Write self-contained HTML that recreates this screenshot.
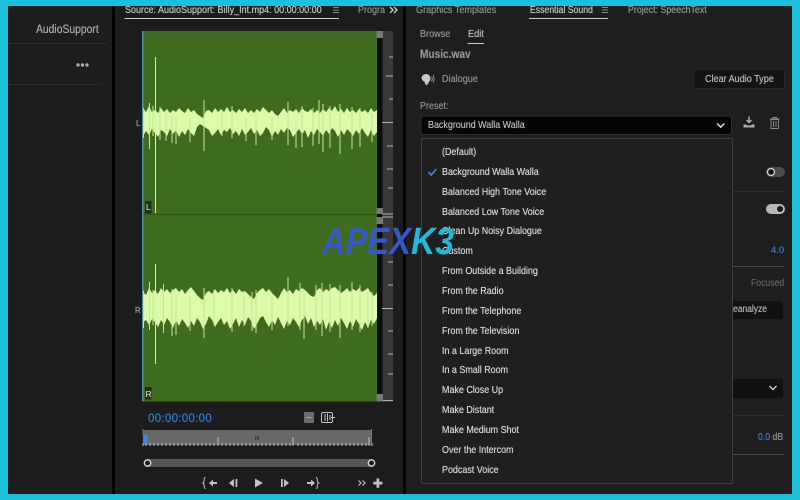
<!DOCTYPE html>
<html><head><meta charset="utf-8"><style>
html,body{margin:0;padding:0;background:#1cc0d9}
#p{position:relative;width:800px;height:500px;overflow:hidden;background:#1cc0d9;font-family:"Liberation Sans",sans-serif;font-size:10px;color:#b8b8b8;filter:blur(.3px)}
.a{position:absolute;white-space:nowrap;line-height:12px;transform-origin:left center;text-shadow:0 0 .5px currentColor}
.m{position:absolute;left:442px;white-space:nowrap;line-height:12px;color:#d4d4d4;font-size:10.4px;transform-origin:left center;transform:scaleX(.86);text-shadow:0 0 .5px currentColor}
svg{position:absolute;left:0;top:0}
</style></head><body><div id="p">
<div class="a" style="left:8px;top:6px;width:784px;height:488px;background:#000"></div>
<div class="a" style="left:8px;top:6px;width:104px;height:488px;background:#1d1d1e"></div>
<div class="a" style="left:115px;top:6px;width:288px;height:488px;background:#1c1c1d"></div>
<div class="a" style="left:406px;top:6px;width:386px;height:488px;background:#1e1e1f"></div>

<svg width="800" height="500" viewBox="0 0 800 500">
<!-- left panel -->
<path d="M8 43.500H108M8 84.500H102" stroke="#2a2a2a" stroke-width="1" fill="none"/>
<circle cx="78" cy="65" r="1.700" fill="#aaa"/><circle cx="82.500" cy="65" r="1.700" fill="#aaa"/><circle cx="87" cy="65" r="1.700" fill="#aaa"/>
<!-- source tab -->
<path d="M124.500 18.500H339" stroke="#ccc" stroke-width="1"/>
<path d="M333 7.500h6M333 10h6M333 12.500h6" stroke="#888" stroke-width="1"/>
<path d="M390 7l3 3-3 3M394 7l3 3-3 3" stroke="#ccc" stroke-width="1.300" fill="none"/>
<!-- waveform -->
<rect x="142" y="31" width="235" height="370.500" fill="#3f6b1e"/>
<rect x="142" y="31" width="1.500" height="370.500" fill="#4f8fa0"/>
<path d="M143 214.500H377" stroke="#31541a" stroke-width="1"/>
<path d="M143 108 146 112 149 106 152 112 155 110 158 113 161 108 164 112 167 109 170 113 173 110 176 112 179 108 182 111 185 113 188 108 191 112 194 110 197 114 200 116 203 118 206 111 209 110 212 113 215 108 218 112 221 109 224 112 227 107 230 112 233 110 236 113 239 109 242 112 245 108 248 113 251 110 254 113 257 109 260 112 263 107 266 110 269 113 272 110 275 114 278 116 281 112 284 108 287 113 290 110 293 112 296 109 299 113 302 108 305 111 308 112 311 109 314 113 317 110 320 113 323 109 326 112 329 108 332 111 335 106 338 112 341 109 344 113 347 108 350 112 353 110 356 113 359 109 362 112 365 110 368 113 371 108 374 112 377 110L377 132 374 136 371 130 368 137 365 133 362 128 359 134 356 130 353 136 350 132 347 129 344 135 341 130 338 137 335 131 332 128 329 134 326 130 323 136 320 132 317 129 314 135 311 131 308 138 305 130 302 134 299 129 296 133 293 137 290 130 287 128 284 133 281 129 278 135 275 131 272 137 269 130 266 127 263 133 260 136 257 130 254 134 251 128 248 132 245 135 242 129 239 136 236 131 233 134 230 128 227 132 224 130 221 135 218 129 215 133 212 136 209 130 206 128 203 126 200 124 197 127 194 136 191 133 188 129 185 135 182 131 179 137 176 130 173 134 170 129 167 136 164 132 161 130 158 137 155 133 152 129 149 135 146 131 143 136Z" fill="#dcfcaa"/>
<path d="M155.500 57V213" stroke="#dcefc0" stroke-width="1"/>
<path d="M143.500 108V138M149.500 103V149M153 106V136M160 107V140M166 112V141M172 116V143M176 116V144M190 118V142M204 100V151M222 110V136M232 106V138M246 118V141M256 115V145M272 116V140M288 102V145M296 124V148M302 106V147M313 108V146M319 100V144M323 104V152M330 106V148M340 104V154M352 107V149M360 108V147M372 110V142" stroke="#c6e59a" stroke-width="1" fill="none"/>
<path d="M143 292 146 295 149 288 152 293 155 290 158 294 161 288 164 292 167 289 170 293 173 290 176 288 179 292 182 289 185 294 188 290 191 287 194 291 197 295 200 298 203 300 206 293 209 291 212 294 215 289 218 293 221 290 224 292 227 288 230 293 233 290 236 294 239 289 242 292 245 291 248 294 251 297 254 299 257 293 260 290 263 288 266 292 269 289 272 293 275 296 278 299 281 293 284 288 287 292 290 290 293 294 296 289 299 291 302 288 305 290 308 293 311 296 314 297 317 290 320 288 323 292 326 289 329 291 332 288 335 287 338 290 341 293 344 291 347 288 350 292 353 289 356 291 359 288 362 292 365 290 368 288 371 293 374 296 377 293L377 318 374 324 371 320 368 328 365 322 362 330 359 324 356 319 353 327 350 321 347 329 344 323 341 318 338 326 335 320 332 328 329 322 326 330 323 319 320 325 317 321 314 327 311 318 308 324 305 316 302 320 299 327 296 322 293 318 290 325 287 321 284 329 281 323 278 317 275 325 272 320 269 327 266 322 263 316 260 318 257 324 254 329 251 321 248 317 245 325 242 320 239 327 236 318 233 324 230 329 227 321 224 325 221 318 218 322 215 327 212 320 209 316 206 324 203 329 200 322 197 318 194 326 191 321 188 328 185 323 182 319 179 326 176 320 173 328 170 322 167 318 164 325 161 320 158 327 155 322 152 319 149 325 146 320 143 322Z" fill="#dcfcaa"/>
<path d="M155.500 264V364" stroke="#dcefc0" stroke-width="1"/>
<path d="M143.500 291V328M149.500 282V330M153 290V325M163.500 284V333M172 289V336M176 294V335M190 296V331M204 288V338M214 290V325M232 288V332M244 296V326M252 292V331M256 290V333M272 296V330M288 277V326M300 283V330M304 290V339M316 285V330M322 283V336M330 284V332M340 285V338M352 282V330M360 285V332M368 290V328M372 292V326" stroke="#c6e59a" stroke-width="1" fill="none"/>
<rect x="145" y="201" width="6.500" height="12.500" fill="#1f3110"/>
<rect x="145" y="387" width="6.500" height="12.500" fill="#1f3110"/>
<!-- meter -->
<rect x="377" y="31" width="5.500" height="370" fill="#0c0c0c"/>
<rect x="382.500" y="31" width="10.500" height="371" fill="#383838"/>
<path d="M389 57h4M386 76h7M389 99h4M382 122.500h11M387 146h6M387 169h6M388 188h5M382 217h11M382 214h11M388 262h5M388 285h5M382 308.500h11M388 331h5M388 354h5M388 374h5M382 400.500h11" stroke="#b4b4b4" stroke-width="1" fill="none"/>
<path d="M377 217h5v4h-5z" fill="#24408a"/>
<rect x="376.500" y="31" width="6.500" height="7" fill="#777"/>
<rect x="376.500" y="208" width="6.500" height="6" fill="#777"/>
<rect x="376.500" y="217" width="6.500" height="7" fill="#777"/>
<rect x="376.500" y="394" width="6.500" height="7.500" fill="#777"/>
<!-- time controls -->
<rect x="304" y="412" width="10" height="11" rx="1" fill="#6b6b6b"/><path d="M306.500 417.500h5" stroke="#aaa" stroke-width="1"/>
<rect x="321.500" y="412.500" width="11" height="10" rx="1.500" fill="none" stroke="#c6c6c6" stroke-width="1"/>
<path d="M325 414v7M327.500 413.500v8M330 415v5M331 417.500h4" stroke="#c6c6c6" stroke-width="1" fill="none"/>
<!-- mini timeline -->
<rect x="143" y="430" width="229" height="15" fill="#686868"/>
<path d="M143 443v3M146 443v3M150 443v3M154 443v3M158 443v3M162 443v3M166 443v3M170 443v3M174 443v3M178 443v3M182 443v3M186 443v3M190 443v3M194 443v3M198 443v3M202 443v3M206 443v3M210 443v3M214 443v3M218 437v9M222 443v3M226 443v3M230 443v3M234 443v3M238 443v3M242 443v3M246 443v3M250 443v3M254 443v3M258 443v3M262 443v3M266 443v3M270 443v3M274 443v3M278 443v3M282 443v3M286 443v3M290 443v3M293 437v9M298 443v3M302 443v3M306 443v3M310 443v3M314 443v3M318 443v3M322 443v3M326 443v3M330 443v3M334 443v3M338 443v3M342 443v3M346 443v3M350 443v3M354 443v3M358 443v3M362 443v3M366 443v3M369 437v9M372 443v3" stroke="#c4c4c4" stroke-width="1" fill="none"/>
<path d="M255.500 436v4M257 436v4M258.500 436v4" stroke="#3a3a3a" stroke-width="1" fill="none"/>
<rect x="143" y="435" width="4.500" height="8.500" fill="#3a8ae6"/>
<path d="M143 429v6M371.500 429v16" stroke="#4a7fd0" stroke-width="1" fill="none"/>
<!-- scrollbar -->
<rect x="147" y="459" width="224" height="8" fill="#565656"/>
<circle cx="147.500" cy="463" r="3.200" fill="#1a1a1a" stroke="#ddd" stroke-width="1.300"/>
<circle cx="371.500" cy="463" r="3.200" fill="#1a1a1a" stroke="#ddd" stroke-width="1.300"/>
<!-- transport -->
<g fill="#c2c2c2" stroke="none">
<path d="M209 483l4-3.500v2.500H217v2H213v2.500z"/>
<path d="M229 483l5-4v8zM235.500 479h1.800v8h-1.800z"/>
<path d="M255 478.500l8 4.500-8 4.500z"/>
<path d="M281 479h1.800v8H281zM284 479l5 4-5 4z"/>
<path d="M315 483l-4-3.500v2.500H307v2h4v2.500z"/>
<path d="M376.500 478.500h2.800v3.200h3.200v2.800h-3.200v3.200h-2.800v-3.200h-3.200v-2.800h3.200z"/>
</g>
<path d="M205.500 477.500c-1.500 0-1.300 1.500-1.300 2.800 0 1.500-.7 2.400-1.500 2.700.8.300 1.500 1.200 1.500 2.700 0 1.300-.2 2.800 1.300 2.800M316 477.500c1.500 0 1.300 1.500 1.300 2.800 0 1.500.7 2.400 1.500 2.700-.8.300-1.500 1.200-1.500 2.700 0 1.300.2 2.800-1.300 2.800" stroke="#c2c2c2" stroke-width="1" fill="none"/>
<path d="M358.500 480.500l2.500 2.500-2.500 2.500M362.500 480.500l2.500 2.500-2.500 2.500" stroke="#c2c2c2" stroke-width="1.200" fill="none"/>
<!-- right panel lines -->
<path d="M529 18.500H608M467.500 43.500H484" stroke="#ccc" stroke-width="1" fill="none"/>
<path d="M602 7.500h6M602 10h6M602 12.500h6" stroke="#888" stroke-width="1"/>
<path d="M733 191.500H785M733 415.500H784" stroke="#2c2c2c" stroke-width="1" fill="none"/>
<path d="M733 266.500H784M733 454.500H784" stroke="#4a4a4a" stroke-width="1" fill="none"/>
<!-- dialog icon -->
<path d="M421.500 79c0-3 2-5 4.500-5s4.500 2 4.500 4.600c0 2-1.300 3-2 3.800-.4.700-.2 2-1.200 2.300h-1.500c-1-.5-.4-1.700-1.100-2.500-1-1-2.700-1.500-2.700-3.200z" fill="#c8c8c8"/>
<path d="M431.500 76.500c1 1.200 1 3.500 0 4.800M433 75c1.500 2 1.500 5.500 0 7.500" stroke="#aaa" stroke-width=".8" fill="none"/>
<!-- clear button -->
<rect x="693.500" y="69.500" width="91" height="19" rx="2" fill="#141414" stroke="#262626"/>
<!-- preset select -->
<rect x="421" y="116" width="310.500" height="18.500" rx="2" fill="#050505" stroke="#2c2c2c"/>
<path d="M717 123.500l3.700 3.700 3.700-3.700" stroke="#ddd" stroke-width="1.500" fill="none"/>
<path d="M749 116.500v5.500M746.500 120l2.500 2.500 2.500-2.500" stroke="#b0b0b0" stroke-width="1.400" fill="none"/>
<path d="M743.500 124.500h2.500l1 1h4l1-1h2.500v3h-11z" fill="#b0b0b0"/>
<path d="M770 119h9.500M773 119v-1.500h3.500v1.500" stroke="#8a8a8a" stroke-width="1" fill="none"/>
<rect x="771" y="119.500" width="7.500" height="9" fill="none" stroke="#8a8a8a" stroke-width="1"/>
<path d="M773.500 121v6M776 121v6" stroke="#8a8a8a" stroke-width="1"/>
<!-- toggles -->
<rect x="766" y="167" width="19" height="10" rx="5" fill="#4c4c4c"/><circle cx="771" cy="172" r="3.500" fill="#141414" stroke="#ddd" stroke-width="1.200"/>
<rect x="766" y="204" width="19" height="10" rx="5" fill="#b8b8b8"/><circle cx="780" cy="209" r="3" fill="#1a1a1a"/>
<!-- reanalyze & select -->
<rect x="720" y="301" width="63" height="18" rx="2" fill="#111"/>
<rect x="720" y="379" width="63" height="19" rx="2" fill="#111"/>
<path d="M769.500 386l3.500 3.500 3.500-3.500" stroke="#ccc" stroke-width="1.400" fill="none"/>
</svg>

<!-- texts -->
<div class="a" style="left:35.500px;top:24px;font-size:11.500px;color:#a9a9a9;transform:scaleX(.9)">AudioSupport</div>
<div class="a" style="left:125px;top:5px;font-size:10px;color:#c4c4c4;transform:scaleX(.9)">Source: AudioSupport: Billy_Int.mp4: 00:00:00:00</div>
<div class="a" style="left:358px;top:5px;width:30px;overflow:hidden;font-size:10px;color:#909090;transform:scaleX(.9)">Program</div>
<div class="a" style="left:136px;top:118px;font-size:8px;color:#999">L</div>
<div class="a" style="left:135px;top:305px;font-size:8px;color:#999">R</div>
<div class="a" style="left:146px;top:201px;font-size:8.500px;color:#ccc">L</div>
<div class="a" style="left:145.500px;top:388px;font-size:8.500px;color:#ccc">R</div>
<div class="a" style="left:148px;top:412.500px;font-size:11.500px;color:#2f7bd8;letter-spacing:.3px">00:00:00:00</div>

<div class="a" style="left:416px;top:5px;font-size:10px;color:#8f8f8f;transform:scaleX(.91)">Graphics Templates</div>
<div class="a" style="left:530px;top:5px;font-size:10px;color:#c4c4c4;transform:scaleX(.87)">Essential Sound</div>
<div class="a" style="left:627.500px;top:5px;font-size:10px;color:#949494;transform:scaleX(.885)">Project: SpeechText</div>
<div class="a" style="left:420px;top:29px;font-size:10px;color:#8f8f8f;transform:scaleX(.91)">Browse</div>
<div class="a" style="left:467.500px;top:29px;font-size:10px;color:#b8b8b8;transform:scaleX(.92)">Edit</div>
<div class="a" style="left:420px;top:49px;font-size:11.500px;font-weight:bold;color:#929292;transform:scaleX(.88)">Music.wav</div>
<div class="a" style="left:442px;top:74px;font-size:10px;color:#8d8d8d;transform:scaleX(.91)">Dialogue</div>
<div class="a" style="left:704.500px;top:73.500px;font-size:10px;color:#b6b6b6;transform:scaleX(.905)">Clear Audio Type</div>
<div class="a" style="left:420px;top:101px;font-size:10px;color:#8d8d8d;transform:scaleX(.9)">Preset:</div>
<div class="a" style="left:428px;top:120px;font-size:10.400px;color:#b8b8b8;transform:scaleX(.86)">Background Walla Walla</div>
<div class="a" style="left:771px;top:245px;font-size:9.500px;color:#3b78cc">4.0</div>
<div class="a" style="left:751px;top:278px;font-size:10px;color:#606060;transform:scaleX(.865)">Focused</div>
<div class="a" style="left:732.500px;top:304px;font-size:10px;color:#b2b2b2;transform:scaleX(.85)">eanalyze</div>
<div class="a" style="left:757.500px;top:432px;font-size:10px;color:#8f8f8f;transform:scaleX(.87)"><span style="color:#3b78cc">0.0</span> dB</div>

<!-- dropdown -->
<div class="a" style="left:420.500px;top:138px;width:310.500px;height:344px;background:#1f1f20;border:1px solid #3d3d3d;border-radius:1px"></div>
<svg width="800" height="500"><path d="M428.500 172l2.800 3 5-6" stroke="#4a84dc" stroke-width="1.600" fill="none"/></svg>
<div class="m" style="top:147px">(Default)</div>
<div class="m" style="top:167px">Background Walla Walla</div>
<div class="m" style="top:186.500px">Balanced High Tone Voice</div>
<div class="m" style="top:206.500px">Balanced Low Tone Voice</div>
<div class="m" style="top:226px">Clean Up Noisy Dialogue</div>
<div class="m" style="top:246px">Custom</div>
<div class="m" style="top:266px">From Outside a Building</div>
<div class="m" style="top:286px">From the Radio</div>
<div class="m" style="top:305.500px">From the Telephone</div>
<div class="m" style="top:325.500px">From the Television</div>
<div class="m" style="top:345.500px">In a Large Room</div>
<div class="m" style="top:365px">In a Small Room</div>
<div class="m" style="top:385px">Make Close Up</div>
<div class="m" style="top:405px">Make Distant</div>
<div class="m" style="top:424.500px">Make Medium Shot</div>
<div class="m" style="top:444.500px">Over the Intercom</div>
<div class="m" style="top:464.500px">Podcast Voice</div>

<!-- watermark -->
<svg width="800" height="500">
<text x="322" y="254" font-family="Liberation Sans, sans-serif" font-weight="bold" font-style="italic" font-size="38" fill="#3459c6" textLength="89" lengthAdjust="spacingAndGlyphs">APEX</text>
<text x="411" y="254" font-family="Liberation Sans, sans-serif" font-weight="bold" font-style="italic" font-size="38" fill="#22b8da" textLength="43" lengthAdjust="spacingAndGlyphs">K3</text>
</svg>
</div></body></html>
